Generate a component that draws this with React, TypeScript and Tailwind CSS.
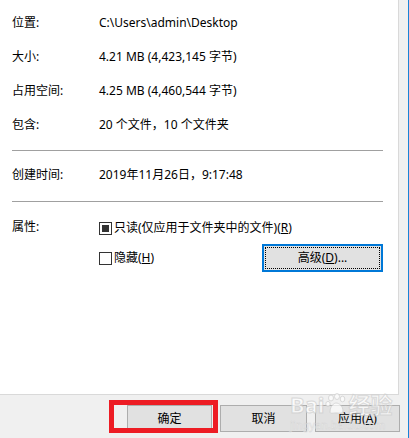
import React from "react";

const font = { fontFamily: '"Noto Sans", "Noto Sans CJK SC", sans-serif' };

function Row({ label, value }: { label: string; value: React.ReactNode }) {
  return (
    <div className="flex h-[34px] items-center">
      <div className="w-[87px]">{label}</div>
      <div>{value}</div>
    </div>
  );
}

function Btn({ children, w }: { children: React.ReactNode; w: string }) {
  return (
    <div
      className={`${w} flex h-[27px] items-center justify-center border border-[#adadad] bg-[#e1e1e1] text-[12px] text-black`}
    >
      {children}
    </div>
  );
}

export default function App() {
  return (
    <div className="relative flex h-[438px] w-[409px] overflow-hidden bg-[#f0f0f0] text-[12px] text-black" style={font}>
      <div className="flex w-[408px] flex-col">
        <div className="flex h-[395px] w-[399px] flex-col border-b border-r border-[#d9d9d9] bg-white pl-[12px] pr-[15px] pt-[6px]">
          <Row label="位置:" value="C:\Users\admin\Desktop" />
          <Row label="大小:" value="4.21 MB (4,423,145 字节)" />
          <Row label="占用空间:" value="4.25 MB (4,460,544 字节)" />
          <Row label="包含:" value="20 个文件，10 个文件夹" />
          <div className="mt-[8px] h-px bg-[#a0a0a0]" />
          <div className="flex h-[48px] items-center">
            <div className="w-[87px]">创建时间:</div>
            <div>2019年11月26日，9:17:48</div>
          </div>
          <div className="mt-[2px] h-px bg-[#a0a0a0]" />
          <div className="mt-[18px] flex h-[16px] items-center">
            <div className="w-[87px] -translate-y-px">属性:</div>
            <div className="flex items-center gap-[2px]">
              <div className="flex h-[13px] w-[13px] items-center justify-center border border-[#333]">
                <div className="h-[7px] w-[7px] bg-[#333]" />
              </div>
              <span>
                只读(仅应用于文件夹中的文件)(<span className="underline">R</span>)
              </span>
            </div>
          </div>
          <div className="mt-[8px] flex h-[28px] items-center">
            <div className="w-[87px]" />
            <div className="flex items-center gap-[2px]">
              <div className="h-[13px] w-[13px] border border-[#333]" />
              <span>
                隐藏(<span className="underline">H</span>)
              </span>
            </div>
            <div className="relative ml-auto flex h-[28px] w-[121px] items-center justify-center border-2 border-[#0078d7] bg-[#e1e1e1]">
              <div className="absolute inset-[1px] border border-dotted border-black" />
              <span>
                高级(<span className="underline">D</span>)...
              </span>
            </div>
          </div>
        </div>
        <div className="flex justify-end gap-[8px] pr-[8px] pt-[10px]">
          <Btn w="w-[85px]">确定</Btn>
          <Btn w="w-[87px]">取消</Btn>
          <Btn w="w-[85px]">
            <span>
              应用(<span className="underline">A</span>)
            </span>
          </Btn>
        </div>
      </div>
      <div className="w-px bg-[#1883d7]" />
      <div className="pointer-events-none absolute left-[109px] top-[400px] h-[33px] w-[109px] border-[5px] border-[#ed1c24]" />
      <div className="pointer-events-none absolute left-[290px] top-[393px] flex flex-col items-start opacity-70">
        <div className="flex items-center text-[22px] font-bold leading-none text-white" style={{ WebkitTextStroke: "1px #cfcfcf" }}>
          <span>Bai</span>
          <svg width="22" height="22" viewBox="0 0 22 22" className="mx-[1px]">
            <g fill="#ffffff" stroke="#cfcfcf" strokeWidth="1">
              <ellipse cx="6" cy="5" rx="2.5" ry="3" />
              <ellipse cx="12" cy="3.5" rx="2.5" ry="3" />
              <ellipse cx="17.5" cy="6" rx="2.3" ry="2.8" />
              <ellipse cx="3" cy="11" rx="2.2" ry="2.6" />
              <path d="M5 19 C5 13 9 10 11 10 C14 10 18 13 18 18 C18 21 14 20 11 20 C8 20 5 21 5 19 Z" />
            </g>
          </svg>
          <span>经验</span>
        </div>
        <div className="mt-[4px] text-[11px] leading-none text-white" style={{ WebkitTextStroke: "0.5px #cfcfcf" }}>
          jingyan.baidu.com
        </div>
      </div>
    </div>
  );
}
